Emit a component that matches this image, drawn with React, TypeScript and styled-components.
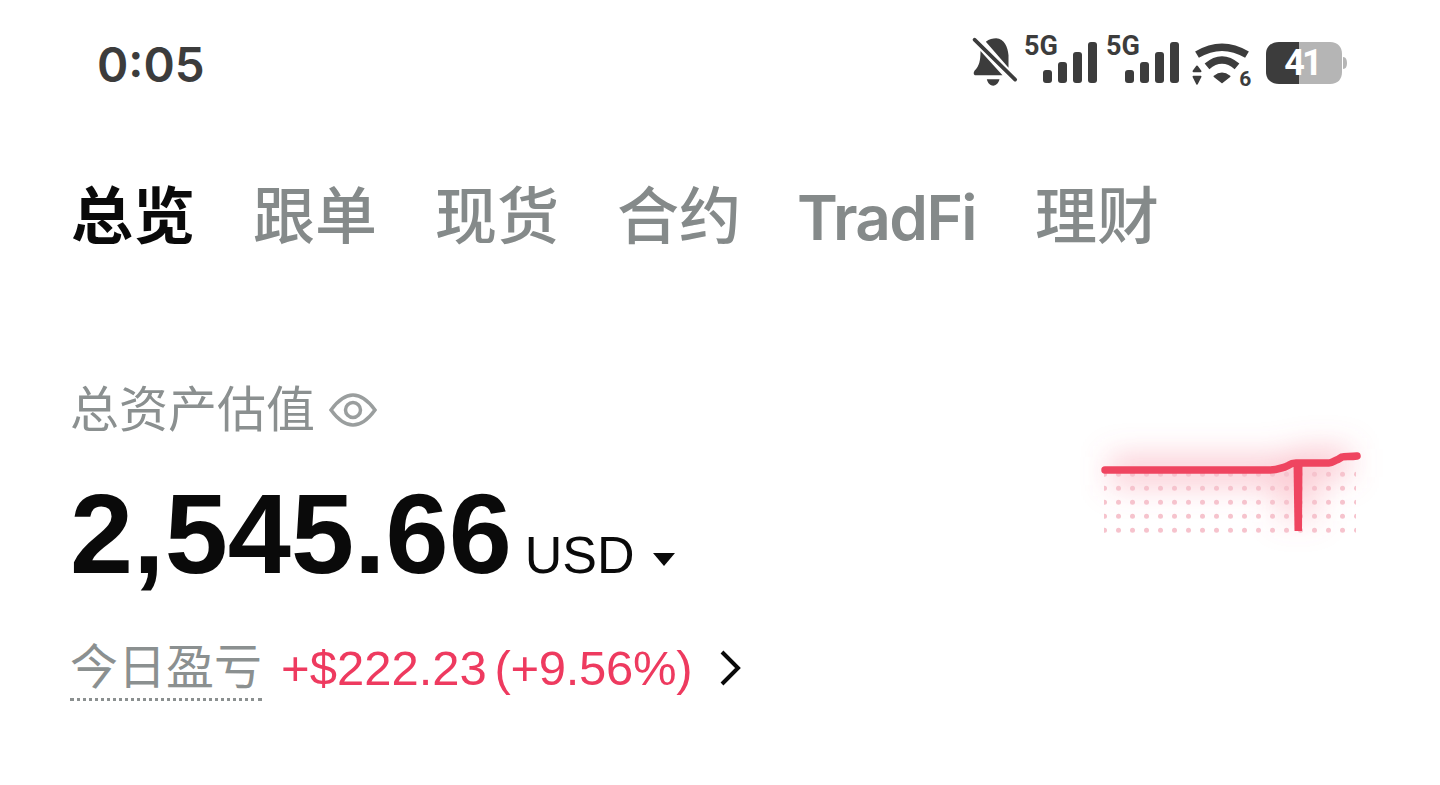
import styled, { createGlobalStyle } from "styled-components";

const GlobalStyle = createGlobalStyle`
  html, body {
    margin: 0;
    padding: 0;
    background: #ffffff;
    font-family: "Liberation Sans", "Noto Sans CJK SC", sans-serif;
  }
`;

const Page = styled.div`
  width: 1440px;
  height: 785px;
  overflow: hidden;
  background: #fff;
`;
const StatusBar = styled.div`
  display: flex;
  align-items: center;
  justify-content: space-between;
  height: 128px;
  padding: 0 93px 2px 97px;
  box-sizing: border-box;
`;
const Time = styled.span`
  margin-top: 2px;
  font-family: Inter, sans-serif;
  font-size: 47.5px;
  font-weight: 600;
  color: #3c3c3c;
`;
const StatusIcons = styled.div`
  display: flex;
  align-items: flex-start;
  height: 52px;
`;
const BellIcon = styled.svg`
  margin-right: 6px;
`;
const Signal = styled.div<{ $gap: number }>`
  position: relative;
  width: 73px;
  height: 52px;
  margin-right: ${(p) => p.$gap}px;
`;
const NetLabel = styled.span`
  position: absolute;
  left: 0;
  top: -4px;
  font-family: Roboto, sans-serif;
  font-size: 27px;
  line-height: 27px;
  font-weight: 700;
  color: #3c3c3c;
`;
const WifiIcon = styled.svg`
  margin: 6px 14px 0 0;
`;
const Battery = styled.div`
  position: relative;
  width: 81px;
  height: 42px;
  margin-top: 5px;
`;
const BatteryLevel = styled.span`
  position: absolute;
  inset: 0 9px 0 0;
  display: flex;
  align-items: center;
  justify-content: center;
  font-family: Roboto, sans-serif;
  font-size: 36px;
  font-weight: 700;
  letter-spacing: -3px;
  color: #fff;
`;
const Tabs = styled.div`
  display: flex;
  align-items: center;
  gap: 58px;
  height: 60px;
  margin-top: 60px;
  padding-left: 71px;
`;
const Tab = styled.span<{ $active?: boolean }>`
  font-size: 62px;
  line-height: 60px;
  font-weight: ${(p) => (p.$active ? 600 : 500)};
  color: ${(p) => (p.$active ? "#0a0a0a" : "#858a8a")};
`;
const LatinTab = styled(Tab)`
  font-family: Inter, sans-serif;
  font-size: 62px;
  font-weight: 600;
  letter-spacing: -1.6px;
  margin: 0 1px 0 -2px;
`;
const Content = styled.div`
  display: flex;
  justify-content: space-between;
  align-items: flex-start;
  padding: 134px 40px 0 72px;
`;
const Summary = styled.div`
  display: flex;
  flex-direction: column;
`;
const LabelRow = styled.div`
  display: flex;
  align-items: center;
  gap: 14px;
  height: 56px;
  margin-left: -2px;
`;
const Label = styled.span`
  font-size: 49px;
  line-height: 56px;
  color: #8b9090;
`;
const ValueRow = styled.div`
  display: flex;
  align-items: baseline;
  height: 112px;
  margin-top: 40px;
  margin-left: -2px;
`;
const Value = styled.span`
  font-size: 113.5px;
  line-height: 112px;
  font-weight: 700;
  color: #0a0a0a;
`;
const Currency = styled.span`
  margin-left: 13px;
  font-size: 52px;
  color: #0a0a0a;
`;
const Caret = styled.span`
  align-self: center;
  width: 0;
  height: 0;
  margin: 50px 0 0 18px;
  border-left: 11px solid transparent;
  border-right: 11px solid transparent;
  border-top: 13px solid #0a0a0a;
`;
const PnlRow = styled.div`
  display: flex;
  align-items: center;
  height: 64px;
  margin-top: 46px;
  margin-left: -2px;
`;
const PnlLabel = styled.span`
  font-size: 48px;
  line-height: 60px;
  padding-top: 3px;
  color: #8b9090;
  border-bottom: 3px dotted #8b9090;
`;
const PnlValue = styled.span`
  margin-left: 19px;
  font-size: 49px;
  word-spacing: -6px;
  color: #ee3a5f;
`;
const PnlPercent = styled.span`
  letter-spacing: -0.3px;
`;
const Chevron = styled.svg`
  margin-left: 27px;
`;
const Spark = styled.svg`
  flex: none;
  margin-top: 29px;
`;

const bars = [
  { x: 19, y: 28, h: 13 },
  { x: 34, y: 20, h: 21 },
  { x: 49, y: 10, h: 31 },
  { x: 64, y: 0, h: 41 },
];

function SignalIcon({ gap }: { gap: number }) {
  return (
    <Signal $gap={gap}>
      <NetLabel>5G</NetLabel>
      <svg width="73" height="52" viewBox="0 0 73 52">
        <g transform="translate(0 5)" fill="#3c3c3c">
          {bars.map((b) => (
            <rect key={b.x} x={b.x} y={b.y} width="9" height={b.h} rx="3" />
          ))}
        </g>
      </svg>
    </Signal>
  );
}

const sparkCols = Array.from({ length: 19 }, (_, i) => i * 14 + 24.5);
const sparkRows = [43.3, 57.3, 71.3, 85.3, 99.3];

export default function App() {
  return (
    <Page>
      <GlobalStyle />
      <StatusBar>
        <Time>0:05</Time>
        <StatusIcons>
          <BellIcon width="47" height="50" viewBox="18 20 140 150">
            <path
              fill="#3c3c3c"
              d="M62 34C72 27 83 24 93 24 118 26 128 50 130 75V112zM46 62L112 135H32C24 135 24 125 30 119 42 107 46 92 46 62zM65 147H103C100 160 91 166 84 166 76 166 68 160 65 147z"
            />
            <path d="M28 28L150 148" stroke="#3c3c3c" strokeWidth="11" strokeLinecap="round" />
          </BellIcon>
          <SignalIcon gap={9} />
          <SignalIcon gap={13} />
          <WifiIcon width="60" height="52" viewBox="20 40 180 156">
            <g fill="none" stroke="#3c3c3c" strokeWidth="22">
              <path d="M35 75Q110 30 185 75" />
              <path d="M65 110Q110 72 155 110" />
            </g>
            <path
              fill="#3c3c3c"
              stroke="#3c3c3c"
              strokeWidth="5"
              strokeLinejoin="round"
              d="M87 140Q110 122 133 140L110 158zM24 125L35 110 46 125zM24 141H46L35 163z"
            />
            <text x="162" y="169" fontFamily="Roboto, sans-serif" fontSize="63" fontWeight="700" fill="#3c3c3c">
              6
            </text>
          </WifiIcon>
          <Battery>
            <svg width="81" height="42" viewBox="0 0 81 42">
              <path fill="#b5b5b5" d="M30 0H64C72 0 76 5 76 12V30C76 37 72 42 64 42H30zM77 15C80 15 81 18 81 21S80 27 77 27z" />
              <path fill="#3c3c3c" d="M13 0H33V42H13C5 42 0 37 0 30V12C0 5 5 0 13 0z" />
            </svg>
            <BatteryLevel>41</BatteryLevel>
          </Battery>
        </StatusIcons>
      </StatusBar>
      <Tabs>
        <Tab $active>总览</Tab>
        <Tab>跟单</Tab>
        <Tab>现货</Tab>
        <Tab>合约</Tab>
        <LatinTab>TradFi</LatinTab>
        <Tab>理财</Tab>
      </Tabs>
      <Content>
        <Summary>
          <LabelRow>
            <Label>总资产估值</Label>
            <svg width="48" height="36" viewBox="0 0 48 36" fill="none" stroke="#9a9e9e" strokeWidth="3.5">
              <path d="M2 18C10 7 17 3 24 3s14 4 22 15c-8 11-15 15-22 15S10 29 2 18z" />
              <circle cx="24" cy="18" r="7.5" />
            </svg>
          </LabelRow>
          <ValueRow>
            <Value>2,545.66</Value>
            <Currency>USD</Currency>
            <Caret />
          </ValueRow>
          <PnlRow>
            <PnlLabel>今日盈亏</PnlLabel>
            <PnlValue>
              +$222.23 <PnlPercent>(+9.56%)</PnlPercent>
            </PnlValue>
            <Chevron width="22" height="38" viewBox="0 0 22 38" fill="none" stroke="#0a0a0a" strokeWidth="4">
              <path d="M3 3l16 16L3 35" />
            </Chevron>
          </PnlRow>
        </Summary>
        <Spark width="320" height="170" viewBox="0 -20 320 170">
          <defs>
            <filter id="glow" filterUnits="userSpaceOnUse" x="0" y="-20" width="320" height="170">
              <feGaussianBlur stdDeviation="15" />
            </filter>
            <clipPath id="dots">
              <rect x="24" y="40" width="252" height="62" />
            </clipPath>
          </defs>
          <g filter="url(#glow)" fill="none" stroke="#f46a80">
            <path d="M30 40H200C210 40 215 34 225 32H270" strokeOpacity="0.34" strokeWidth="30" />
            <path d="M218 40V90" strokeOpacity="0.22" strokeWidth="44" />
          </g>
          <g clipPath="url(#dots)" fill="#f6c3cd">
            {sparkRows.map((y) => sparkCols.map((x) => <circle key={`${x}-${y}`} cx={x} cy={y} r="2.5" />))}
          </g>
          <path
            d="M25 39H190C197 39 201 37 205 36L209 34C211 32.500 213 32 216 32H249C253 32 255 29 258 28.500L262 26C265 25 270 26 277 25"
            fill="none"
            stroke="#ef4560"
            strokeWidth="7.5"
            strokeLinecap="round"
          />
          <path d="M213.500 32h9l-.5 68h-7.500z" fill="#ef4560" />
        </Spark>
      </Content>
    </Page>
  );
}
